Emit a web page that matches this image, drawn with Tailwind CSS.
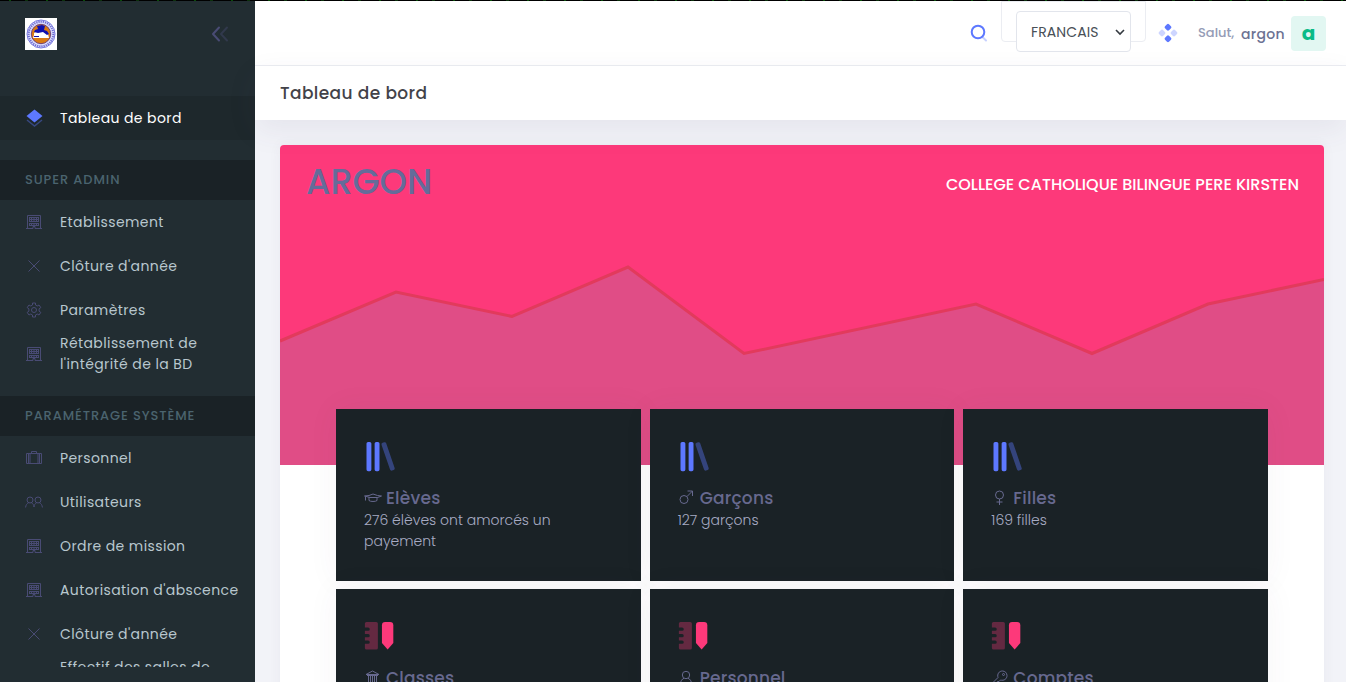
<!DOCTYPE html>
<html lang="fr">
<head>
<meta charset="utf-8">
<title>Tableau de bord</title>
<script src="https://cdn.jsdelivr.net/npm/@tailwindcss/browser@4"></script>
</head>
<body class="h-[682px] overflow-hidden bg-[#f2f3f8] font-['Poppins','Inter',sans-serif] text-sm text-[#646c9a]">
<svg class="hidden" xmlns="http://www.w3.org/2000/svg">
  <symbol id="building" viewBox="0 0 16 16"><path fill="none" stroke="currentColor" d="M1.5 15V1.5h13V15M0 14.5h7v-2h2v2h7M3 3.5h10M3 5.5h10M3 7.500h10M3 9.500h10M3 11.500h10" /><path fill="none" stroke="currentColor" d="M3.500 3v9M5.500 3v9M8 3v9M10.500 3v9M12.500 3v9" stroke-dasharray="2 1"/></symbol>
  <symbol id="cross" viewBox="0 0 16 16"><path fill="none" stroke="currentColor" d="M2.500 2.500l11 11M13.500 2.500l-11 11"/></symbol>
  <symbol id="gear" viewBox="0 0 16 16"><g fill="none" stroke="currentColor"><path stroke-linejoin="round" d="M6.500 1h3v2l1.700 1 1.800-1 1.800 2.600-1.700 1.200v2.400l1.700 1.200L13 13l-1.800-1-1.700 1v2h-3v-2l-1.700-1L3 13 1.200 10.400l1.700-1.200V6.800L1.200 5.600 3 3l1.800 1 1.700-1z"/><circle cx="8" cy="8" r="2.500"/></g></symbol>
  <symbol id="case" viewBox="0 0 16 16"><path fill="none" stroke="currentColor" d="M.5 3.500h15v10H.5zM2.500 3.500v10M4 3.500v10M12 3.500v10M13.500 3.500v10M5.500 3.500v-2h5v2"/></symbol>
  <symbol id="users" viewBox="0 0 18 16"><g fill="none" stroke="currentColor"><circle cx="5" cy="6" r="3"/><circle cx="13" cy="6" r="3"/><path d="M.6 13.500C.8 11 2 9.500 3.600 8.800M6.400 8.800C8 9.500 8.800 11 9 13M9 13c.2-2 1-3.500 2.600-4.200M14.400 8.800c1.600.7 2.800 2.200 3 4.700"/></g></symbol>
  <symbol id="library" viewBox="0 0 24 24"><path fill="currentColor" d="M5 3h1a1 1 0 0 1 1 1v16a1 1 0 0 1-1 1H5a1 1 0 0 1-1-1V4a1 1 0 0 1 1-1zM10 3h1a1 1 0 0 1 1 1v16a1 1 0 0 1-1 1h-1a1 1 0 0 1-1-1V4a1 1 0 0 1 1-1z"/><rect fill="currentColor" opacity=".4" transform="rotate(-19 17.300 11.950)" x="15.800" y="2.950" width="3" height="18" rx="1"/></symbol>
  <symbol id="ruler" viewBox="0 0 24 24"><path fill="currentColor" opacity=".33" d="M4 3h6a1 1 0 0 1 1 1v15a1 1 0 0 1-1 1H4a1 1 0 0 1-1-1v-2.500h2a1 1 0 0 0 0-2H3v-2h2a1 1 0 0 0 0-2H3v-2h2a1 1 0 0 0 0-2H3V4a1 1 0 0 1 1-1z"/><path fill="currentColor" d="M15.500 3h3a2 2 0 0 1 2 2v11L17 20l-3.500-4V5a2 2 0 0 1 2-2z"/></symbol>
</svg>
<div class="relative flex h-full pt-px">
  <div class="absolute inset-x-0 top-0 h-px bg-[repeating-linear-gradient(90deg,#000_0_9px,#064a06_9px_11px,#000_11px_25px,#0a2f0a_25px_28px,#000_28px_37px)]"></div>

  <aside class="flex w-[255px] shrink-0 flex-col bg-[#222d32]">
    <div class="flex h-[65px] items-center justify-between pl-[25px] pr-[26px]">
      <svg class="h-8 w-8" viewBox="0 0 32 32"><path fill="#fff" d="M0 0h32v32H0z"/><circle cx="16" cy="16" r="14" fill="#dcdcfa" stroke="#7a7ae0"/><circle cx="16" cy="16" r="12.300" fill="none" stroke="#6a6ad4" stroke-width="2" stroke-dasharray="1.200 1"/><circle cx="16" cy="16" r="9.700" fill="#d97a14" stroke="#5a2a70" stroke-width=".8"/><path fill="#fff" d="M9 15l5-3 4 1 5 3 1 4H8l1-3z"/><path fill="#1010b0" d="M12 8l5-1 3 1-1 4 3 1 2 3-2 1-4-3-5 1-4-1 1-2 3-1zM9 18h5v1H9z"/></svg>
      <svg class="h-[18px] w-[18px] text-[#494b74]" viewBox="0 0 18 18" fill="none" stroke="currentColor" stroke-width="2" stroke-linecap="round" stroke-linejoin="round"><path d="M8 2.500L2 9l6 6.500"/><path opacity=".4" d="M16 2.500L10 9l6 6.500"/></svg>
    </div>
    <nav class="mt-[30px] h-[571px] overflow-hidden text-[#b8c7ce]">
      <a class="flex h-11 items-center bg-[#1e282c] pl-[25px] text-white">
        <svg class="mr-[17px] h-[18px] w-[18px]" viewBox="0 0 18 18"><path fill="#5d78ff" d="M9.500.5L17.500 7l-8 6.500L1.500 7z"/><path fill="none" stroke="#5d78ff" stroke-width="1.500" opacity=".4" d="M2 11l7.500 6L17 11"/></svg>
        <span class="tracking-[.4px]">Tableau de bord</span></a>
      <h4 class="mt-5 flex h-10 items-center bg-[#1a2226] pl-[25px] text-[13px] font-medium tracking-[.9px] text-[#4b646f]">SUPER ADMIN</h4>
      <a class="flex h-11 items-center pl-[26px]"><svg class="mr-[18px] h-4 w-4 text-[#494b74]"><use href="#building"/></svg><span class="tracking-[.4px]">Etablissement</span></a>
      <a class="flex h-11 items-center pl-[26px]"><svg class="mr-[18px] h-4 w-4 text-[#494b74]"><use href="#cross"/></svg><span class="tracking-[.4px]">Clôture d'année</span></a>
      <a class="flex h-11 items-center pl-[26px]"><svg class="mr-[18px] h-4 w-4 text-[#494b74]"><use href="#gear"/></svg><span class="tracking-[.4px]">Paramètres</span></a>
      <a class="flex h-11 items-center pl-[26px]"><svg class="mr-[18px] h-4 w-4 text-[#494b74]"><use href="#building"/></svg><span class="leading-[21px] tracking-[.4px]">Rétablissement de<br>l'intégrité de la BD</span></a>
      <h4 class="mt-5 flex h-10 items-center bg-[#1a2226] pl-[25px] text-[13px] font-medium tracking-[.9px] text-[#4b646f]">PARAMÉTRAGE SYSTÈME</h4>
      <a class="flex h-11 items-center pl-[26px]"><svg class="mr-[18px] h-4 w-4 text-[#494b74]"><use href="#case"/></svg><span class="tracking-[.4px]">Personnel</span></a>
      <a class="flex h-11 items-center pl-[25px]"><svg class="mr-[17px] h-4 w-[18px] text-[#494b74]"><use href="#users"/></svg><span class="tracking-[.4px]">Utilisateurs</span></a>
      <a class="flex h-11 items-center pl-[26px]"><svg class="mr-[18px] h-4 w-4 text-[#494b74]"><use href="#building"/></svg><span class="tracking-[.4px]">Ordre de mission</span></a>
      <a class="flex h-11 items-center pl-[26px]"><svg class="mr-[18px] h-4 w-4 text-[#494b74]"><use href="#building"/></svg><span class="tracking-[.4px]">Autorisation d'abscence</span></a>
      <a class="flex h-11 items-center pl-[26px]"><svg class="mr-[18px] h-4 w-4 text-[#494b74]"><use href="#cross"/></svg><span class="tracking-[.4px]">Clôture d'année</span></a>
      <a class="flex h-11 items-center pl-[60px]"><span class="leading-[21px] tracking-[.4px]">Effectif des salles de<br>classe</span></a>
    </nav>
  </aside>

  <div class="flex min-w-0 flex-1 flex-col">
    <header class="flex h-[65px] shrink-0 items-start justify-end border-b border-[#ebedf2] bg-white pr-5">
      <svg class="mr-[13px] mt-[23px] h-[18px] w-[18px]" viewBox="0 0 18 18" fill="none" stroke="#5d78ff" stroke-width="2"><path opacity=".35" stroke-linecap="round" d="M13 13.500l3 3"/><circle cx="8" cy="8" r="6.300"/></svg>
      <div class="h-[41px] w-[145px] rounded-b border border-[#ebedf2] px-3.5">
        <div class="mt-[9px] flex h-[41px] w-[115px] items-center justify-between rounded border border-[#e2e5ec] bg-white pl-3.5 pr-1 text-[#495057]">
          <span class="tracking-[.1px]">FRANCAIS</span>
          <svg class="h-3 w-3" viewBox="0 0 12 12" fill="none" stroke="#343a40" stroke-width="1.600"><path d="M2 4l4 4 4-4"/></svg>
        </div>
      </div>
      <svg class="ml-3 mt-[22px] h-5 w-5" viewBox="0 0 20 20" fill="#5d78ff"><rect x="7.200" y="1.500" width="5.600" height="5.600" rx="1.400" transform="rotate(45 10 4.300)"/><rect x="7.200" y="13" width="5.600" height="5.600" rx="1.400" transform="rotate(45 10 15.800)"/><g opacity=".3"><rect x="1.200" y="7.200" width="5.600" height="5.600" rx="1.400" transform="rotate(45 4 10)"/><rect x="13.200" y="7.200" width="5.600" height="5.600" rx="1.400" transform="rotate(45 16 10)"/></g></svg>
      <div class="ml-5 mt-[15px] flex h-[35px] items-center">
        <span class="w-[43px] text-[13px] font-medium text-[#959cb6]">Salut,</span>
        <span class="w-[50px] font-medium tracking-[.3px] text-[#6c7293]">argon</span>
        <span class="flex h-[35px] w-[35px] items-center justify-center rounded bg-[#e2f7f2] pb-0.5 text-xl font-bold text-[#0abb87]">a</span>
      </div>
    </header>
    <div class="z-10 flex h-[54px] shrink-0 items-center bg-white pl-[25px] shadow-[0_10px_30px_0_rgba(82,63,105,.08)]">
      <h3 class="text-[17px] font-medium tracking-[.4px] text-[#434349]">Tableau de bord</h3>
    </div>
    <main class="flex-1 px-[25px] pr-[22px] pt-[25px]">
      <section class="h-[560px] rounded bg-white shadow-[0_0_13px_0_rgba(82,63,105,.05)]">
        <div class="relative h-80 overflow-hidden rounded-t bg-[#fd397a]">
          <svg class="absolute inset-0 h-full w-full" viewBox="0 0 1044 320"><path fill="#e04d86" d="M0 196L116 147L232 171.500L348 122L464 208.500L696 159L812 208.500L928 159L1044 134.500V320H0z"/><path fill="none" stroke="#e23a5c" stroke-width="3" d="M0 196L116 147L232 171.500L348 122L464 208.500L696 159L812 208.500L928 159L1044 134.500"/></svg>
          <div class="relative flex items-center justify-between pl-[26px] pr-[25px] pt-[14px]">
            <h1 class="text-[35px] font-medium leading-[46px]">ARGON</h1>
            <p class="pt-1.5 text-base font-medium text-white">COLLEGE CATHOLIQUE BILINGUE PERE KIRSTEN</p>
          </div>
        </div>
        <div class="relative -mt-14 grid grid-cols-3 gap-x-[9px] gap-y-2 px-14">
          <article class="h-[172px] bg-[#1a2226] p-7 shadow-[0_0_30px_0_rgba(82,63,105,.05)]">
            <svg class="-ml-1 h-[39px] w-[39px] text-[#5d78ff]"><use href="#library"/></svg>
            <h2 class="mt-2.5 flex h-6 items-center gap-1 text-[17px] font-medium text-[#67698f]"><svg class="h-[18px] w-[18px]" viewBox="0 0 18 18" fill="none" stroke="currentColor"><path d="M5 6.500l4-1.500 4.500 1.500 4 .5-4 1.500H6L.5 7l4.500-.5M5 8v3.500c1 1.300 7 1.300 8 0V8M1.500 7.500v4M6.500 8.500h5"/></svg><span class="tracking-[.2px]">Elèves</span></h2>
            <p class="w-[200px] leading-[21px] font-light text-[#a7abc3]">276 élèves ont amorcés un payement</p>
          </article>
          <article class="h-[172px] bg-[#1a2226] p-7 shadow-[0_0_30px_0_rgba(82,63,105,.05)]">
            <svg class="-ml-1 h-[39px] w-[39px] text-[#5d78ff]"><use href="#library"/></svg>
            <h2 class="mt-2.5 flex h-6 items-center gap-1 text-[17px] font-medium text-[#67698f]"><svg class="h-[18px] w-[18px]" viewBox="0 0 18 18" fill="none" stroke="currentColor"><circle cx="6" cy="10.500" r="4"/><path d="M9 7.500L14.500 2M9.500 2h5v5"/></svg><span class="tracking-[.2px]">Garçons</span></h2>
            <p class="leading-[21px] font-light text-[#a7abc3]">127 garçons</p>
          </article>
          <article class="h-[172px] bg-[#1a2226] p-7 shadow-[0_0_30px_0_rgba(82,63,105,.05)]">
            <svg class="-ml-1 h-[39px] w-[39px] text-[#5d78ff]"><use href="#library"/></svg>
            <h2 class="mt-2.5 flex h-6 items-center gap-1 text-[17px] font-medium text-[#67698f]"><svg class="h-[18px] w-[18px]" viewBox="0 0 18 18" fill="none" stroke="currentColor"><circle cx="8.500" cy="6" r="4"/><path d="M8.500 10v6M5.500 13h6"/></svg><span class="tracking-[.2px]">Filles</span></h2>
            <p class="leading-[21px] font-light text-[#a7abc3]">169 filles</p>
          </article>
          <article class="h-[172px] bg-[#1a2226] p-7 shadow-[0_0_30px_0_rgba(82,63,105,.05)]">
            <svg class="-ml-1 h-[39px] w-[39px] text-[#fd397a]"><use href="#ruler"/></svg>
            <h2 class="mt-2.5 flex h-6 items-center gap-1 text-[17px] font-medium text-[#67698f]"><svg class="h-[18px] w-[18px]" viewBox="0 0 18 18" fill="none" stroke="currentColor"><path d="M2 5.500L8.500 2 15 5.500zM3 6.500h11M4.500 7v8M6.500 7v8M8.500 7v8M10.500 7v8M12.500 7v8M2 15.500h13"/></svg><span class="tracking-[.2px]">Classes</span></h2>
          </article>
          <article class="h-[172px] bg-[#1a2226] p-7 shadow-[0_0_30px_0_rgba(82,63,105,.05)]">
            <svg class="-ml-1 h-[39px] w-[39px] text-[#fd397a]"><use href="#ruler"/></svg>
            <h2 class="mt-2.5 flex h-6 items-center gap-1 text-[17px] font-medium text-[#67698f]"><svg class="h-[18px] w-[18px]" viewBox="0 0 18 18" fill="none" stroke="currentColor"><circle cx="8" cy="6" r="3.700"/><path d="M6 9.300C4 10 2.500 12 2.500 15M10 9.300c2 .7 3.500 2.700 3.500 5.700"/></svg><span class="tracking-[.2px]">Personnel</span></h2>
          </article>
          <article class="h-[172px] bg-[#1a2226] p-7 shadow-[0_0_30px_0_rgba(82,63,105,.05)]">
            <svg class="-ml-1 h-[39px] w-[39px] text-[#fd397a]"><use href="#ruler"/></svg>
            <h2 class="mt-2.5 flex h-6 items-center gap-1 text-[17px] font-medium text-[#67698f]"><svg class="h-[18px] w-[18px]" viewBox="0 0 18 18" fill="none" stroke="currentColor"><path d="M7 8.500C6 5 8 2 11.500 2 14 2 16 4 16 6.500c0 3.500-3 5.500-6.500 4.500L8 12.500H6.500V14H5v1.500H2V13.500z"/><circle cx="12.500" cy="5.500" r="1"/></svg><span class="tracking-[.2px]">Comptes</span></h2>
          </article>
        </div>
      </section>
    </main>
  </div>
</div>
</body>
</html>
